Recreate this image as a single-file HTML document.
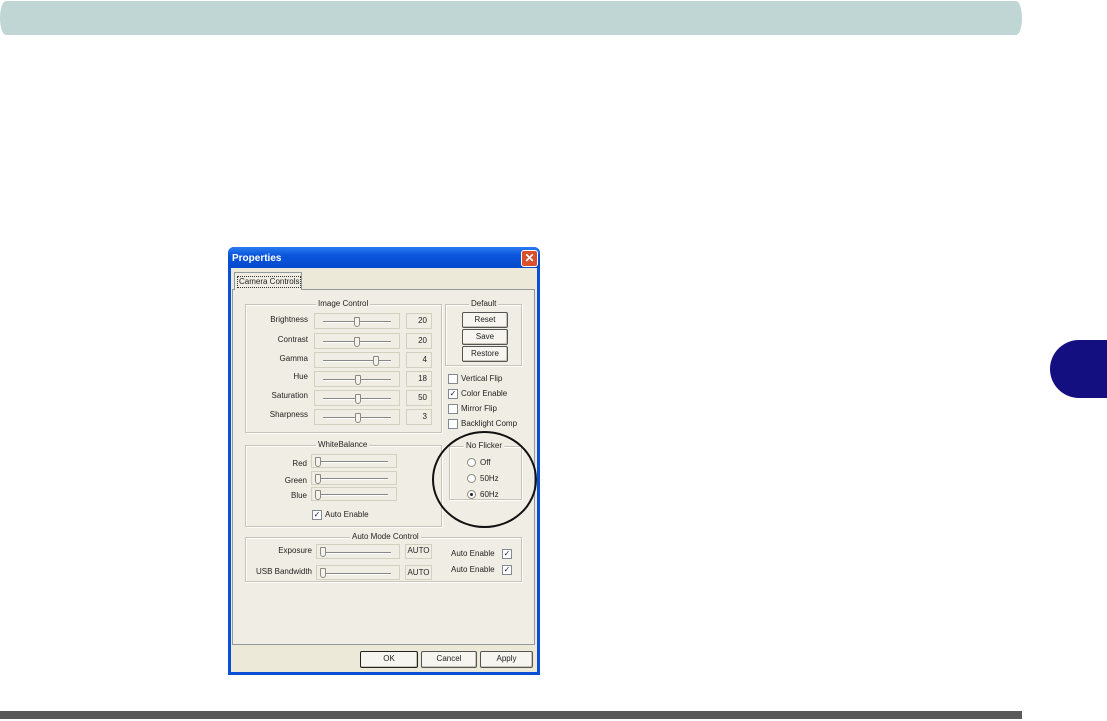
<!DOCTYPE html>
<html><head><style>
*{margin:0;padding:0;box-sizing:border-box}
body{width:1107px;height:721px;background:#fff;position:relative;overflow:hidden;font-family:"Liberation Sans",sans-serif}
.a{position:absolute}
.t{position:absolute;font-size:8px;color:#222;white-space:nowrap;line-height:10px}
.g{position:absolute;border:1px solid #c8c5b8;box-shadow:inset 1px 1px 0 #fff,1px 1px 0 #fff}
.gl{position:absolute;top:-6px;background:#f0eee4;padding:0 2px;font-size:8px;color:#222;line-height:10px;white-space:nowrap}
.sl{position:absolute;border:1px solid #d4d0c0;height:16px}
.sl i{position:absolute;left:8px;right:8px;top:7px;height:2px;border-top:1px solid #888;border-bottom:1px solid #fff}
.sl b{position:absolute;top:3px;width:6px;height:10px;background:#f4f3ee;border:1px solid #8a8a80;border-radius:1px 1px 3px 3px}
.vb{position:absolute;border:1px solid #d4d0c0;height:16px;font-size:8px;text-align:right;padding-right:4px;line-height:14px;color:#222}
.bt{position:absolute;border:1px solid #555;background:#f6f5f0;border-radius:2px;font-size:8px;text-align:center;line-height:14px;color:#222;box-shadow:inset -1px -1px 0 #c8c5b8}
.cb{position:absolute;width:10px;height:10px;border:1px solid #7f8a94;background:#fff;font-size:8px;line-height:8px;text-align:center;color:#214}
.rb{position:absolute;width:9px;height:9px;border:1px solid #8a8a80;border-radius:50%;background:#fff}
</style></head><body>
<div class="a" style="left:0;top:1px;width:1022px;height:34px;background:#c0d6d4;border-radius:6px/17px"></div>
<div class="a" style="left:1050px;top:340px;width:57px;height:58px;background:#140f80;border-radius:29px 0 0 29px"></div>
<div class="a" style="left:0;top:711px;width:1022px;height:8px;background:#5a5a5a"></div>

<div class="a" style="left:228px;top:247px;width:312px;height:428px;background:#0a4fd4;border-radius:6px 6px 0 0"></div>
<div class="a" style="left:228px;top:247px;width:312px;height:21px;background:linear-gradient(#2b7cf0,#0a55dc 40%,#0549cc);border-radius:6px 6px 0 0"></div>
<div class="t" style="left:232px;top:254px;font-size:10px;font-weight:bold;color:#fff">Properties</div>
<div class="a" style="left:521px;top:250px;width:17px;height:17px;background:#d8502c;border:1px solid #fff;border-radius:3px;color:#fff;font-size:12px;line-height:15px;text-align:center;font-weight:bold">✕</div>
<div class="a" style="left:231px;top:268px;width:306px;height:404px;background:#ece9d8"></div>
<div class="a" style="left:232px;top:289px;width:303px;height:356px;border:1px solid #919b9c;background:#f0eee4"></div>
<div class="a" style="left:234px;top:272px;width:68px;height:18px;border:1px solid #919b9c;border-bottom:none;background:#f0eee4"></div>
<div class="t" style="left:237px;top:276px;border:1px dotted #333;padding:0 1px">Camera Controls</div>

<div class="g" style="left:245px;top:304px;width:197px;height:129px"><div class="gl" style="left:70px">Image Control</div></div>
<div class="t" style="left:250px;top:315px;width:58px;text-align:right">Brightness</div>
<div class="t" style="left:250px;top:335px;width:58px;text-align:right">Contrast</div>
<div class="t" style="left:250px;top:354px;width:58px;text-align:right">Gamma</div>
<div class="t" style="left:250px;top:372px;width:58px;text-align:right">Hue</div>
<div class="t" style="left:250px;top:391px;width:58px;text-align:right">Saturation</div>
<div class="t" style="left:250px;top:410px;width:58px;text-align:right">Sharpness</div>
<div class="sl" style="left:314px;top:313px;width:86px"><i></i><b style="left:39px"></b></div>
<div class="sl" style="left:314px;top:333px;width:86px"><i></i><b style="left:39px"></b></div>
<div class="sl" style="left:314px;top:352px;width:86px"><i></i><b style="left:58px"></b></div>
<div class="sl" style="left:314px;top:371px;width:86px"><i></i><b style="left:40px"></b></div>
<div class="sl" style="left:314px;top:390px;width:86px"><i></i><b style="left:40px"></b></div>
<div class="sl" style="left:314px;top:409px;width:86px"><i></i><b style="left:40px"></b></div>
<div class="vb" style="left:406px;top:313px;width:26px">20</div>
<div class="vb" style="left:406px;top:333px;width:26px">20</div>
<div class="vb" style="left:406px;top:352px;width:26px">4</div>
<div class="vb" style="left:406px;top:371px;width:26px">18</div>
<div class="vb" style="left:406px;top:390px;width:26px">50</div>
<div class="vb" style="left:406px;top:409px;width:26px">3</div>

<div class="g" style="left:445px;top:304px;width:77px;height:62px"><div class="gl" style="left:23px">Default</div></div>
<div class="bt" style="left:462px;top:312px;width:46px;height:16px">Reset</div>
<div class="bt" style="left:462px;top:329px;width:46px;height:16px">Save</div>
<div class="bt" style="left:462px;top:346px;width:46px;height:16px">Restore</div>

<div class="cb" style="left:448px;top:374px"></div><div class="t" style="left:461px;top:374px">Vertical Flip</div>
<div class="cb" style="left:448px;top:389px">✓</div><div class="t" style="left:461px;top:389px">Color Enable</div>
<div class="cb" style="left:448px;top:404px"></div><div class="t" style="left:461px;top:404px">Mirror Flip</div>
<div class="cb" style="left:448px;top:419px"></div><div class="t" style="left:461px;top:419px">Backlight Comp</div>

<div class="g" style="left:245px;top:445px;width:197px;height:82px"><div class="gl" style="left:70px">WhiteBalance</div></div>
<div class="t" style="left:260px;top:459px;width:47px;text-align:right">Red</div>
<div class="t" style="left:260px;top:476px;width:47px;text-align:right">Green</div>
<div class="t" style="left:260px;top:491px;width:47px;text-align:right">Blue</div>
<div class="sl" style="left:311px;top:454px;width:86px;height:14px"><i style="top:6px;left:5px"></i><b style="left:3px;top:2px"></b></div>
<div class="sl" style="left:311px;top:471px;width:86px;height:14px"><i style="top:6px;left:5px"></i><b style="left:3px;top:2px"></b></div>
<div class="sl" style="left:311px;top:487px;width:86px;height:14px"><i style="top:6px;left:5px"></i><b style="left:3px;top:2px"></b></div>
<div class="cb" style="left:312px;top:510px">✓</div><div class="t" style="left:325px;top:510px">Auto Enable</div>

<div class="g" style="left:449px;top:446px;width:73px;height:54px"><div class="gl" style="left:14px">No Flicker</div></div>
<div class="rb" style="left:467px;top:458px"></div><div class="t" style="left:480px;top:458px">Off</div>
<div class="rb" style="left:467px;top:474px"></div><div class="t" style="left:480px;top:474px">50Hz</div>
<div class="rb" style="left:467px;top:490px"><div class="a" style="left:2px;top:2px;width:3px;height:3px;background:#222;border-radius:50%"></div></div><div class="t" style="left:480px;top:490px">60Hz</div>
<div class="a" style="left:432px;top:431px;width:105px;height:97px;border:2px solid #111;border-radius:50%"></div>

<div class="g" style="left:245px;top:537px;width:277px;height:45px"><div class="gl" style="left:104px">Auto Mode Control</div></div>
<div class="t" style="left:250px;top:546px;width:62px;text-align:right">Exposure</div>
<div class="t" style="left:250px;top:567px;width:62px;text-align:right">USB Bandwidth</div>
<div class="sl" style="left:316px;top:544px;width:84px;height:15px"><i style="left:6px"></i><b style="left:3px;top:2px"></b></div>
<div class="sl" style="left:316px;top:565px;width:84px;height:15px"><i style="left:6px"></i><b style="left:3px;top:2px"></b></div>
<div class="vb" style="left:405px;top:544px;width:27px;height:15px;text-align:center;padding:0;line-height:12px">AUTO</div>
<div class="vb" style="left:405px;top:565px;width:27px;height:15px;text-align:center;padding:0;line-height:13px">AUTO</div>
<div class="t" style="left:451px;top:549px">Auto Enable</div><div class="cb" style="left:502px;top:549px">✓</div>
<div class="t" style="left:451px;top:565px">Auto Enable</div><div class="cb" style="left:502px;top:565px">✓</div>

<div class="bt" style="left:360px;top:651px;width:58px;height:17px;border-color:#222">OK</div>
<div class="bt" style="left:421px;top:651px;width:56px;height:17px">Cancel</div>
<div class="bt" style="left:480px;top:651px;width:53px;height:17px">Apply</div>
</body></html>
